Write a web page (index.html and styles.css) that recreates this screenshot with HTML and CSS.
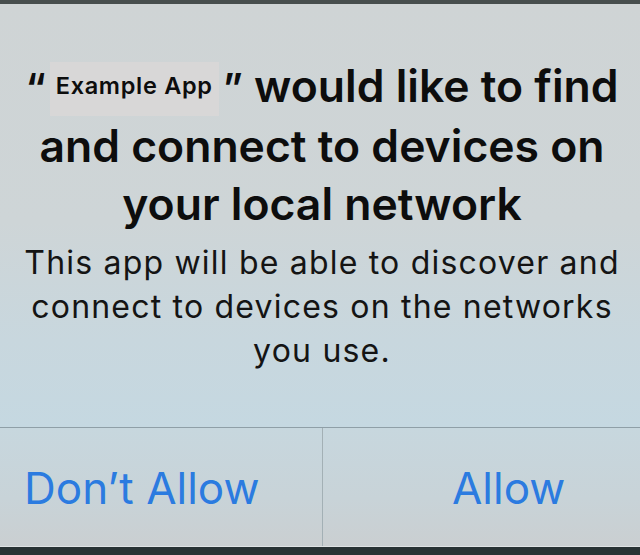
FILE: index.html
```html
<!DOCTYPE html>
<html lang="en">
<head>
<meta charset="utf-8">
<title>Local Network Permission</title>
<link rel="stylesheet" href="styles.css">
</head>
<body>
<div class="screen">
  <div class="topbar"></div>
  <div class="alert">
    <div class="content">
      <h1 class="title"><span class="q">“</span><span class="appname">Example App</span><span class="q q-close">”</span> would like to find<br>and connect to devices on<br>your local network</h1>
      <p class="message">This app will be able to discover and<br>connect to devices on the networks<br>you use.</p>
    </div>
    <div class="actions">
      <div class="btn btn-left">Don’t Allow</div>
      <div class="btn btn-right">Allow</div>
    </div>
  </div>
  <div class="bottombar"></div>
</div>
</body>
</html>
```

FILE: styles.css
```css
html, body {
  margin: 0;
  padding: 0;
}
body {
  width: 640px;
  height: 555px;
  overflow: hidden;
  font-family: Inter, "Liberation Sans", sans-serif;
  color: #0d0d0d;
}
.screen {
  width: 640px;
  height: 555px;
  display: flex;
  flex-direction: column;
}
.topbar {
  height: 4px;
  background: #474e4d;
  flex: none;
}
.alert {
  flex: 1;
  display: flex;
  flex-direction: column;
  background: linear-gradient(180deg, #cfd4d5 0%, #ced5d7 40%, #c8d7de 62%, #c5d8e1 78%);
}
.content {
  height: 424px;
  box-sizing: border-box;
  padding-top: 53px;
  padding-left: 4px;
  text-align: center;
  border-bottom: 1px solid #8f9fa7;
}
.title {
  margin: 0;
  font-size: 44.5px;
  font-weight: 600;
  line-height: 58px;
  letter-spacing: 0;
}
.q {
  font-size: 40px;
}
.appname {
  display: inline-block;
  font-size: 23.5px;
  font-weight: 600;
  line-height: 47px;
  padding: 0 6px 7px;
  margin: 0 4px;
  background: #d8d7d7;
  vertical-align: 8px;
  letter-spacing: 0.7px;
}
.message {
  margin: 8px 0 0;
  font-size: 32px;
  font-weight: 400;
  line-height: 44px;
  letter-spacing: 1.2px;
  color: #141414;
}
.actions {
  flex: 1;
  display: grid;
  grid-template-columns: 323px 1fr;
  background: linear-gradient(180deg, #c7d7de 0%, #c8d3d8 60%, #cacfd1 100%);
  border-bottom: 1px solid #dfe3e4;
}
.btn {
  display: flex;
  align-items: center;
  font-size: 44px;
  font-weight: 400;
  color: #2b7be0;
  padding-top: 2px;
}
.btn-left {
  border-right: 1px solid #a3b0b5;
  padding-left: 24px;
}
.btn-right {
  padding-left: 129px;
}
.bottombar {
  height: 8px;
  background: #283234;
  flex: none;
}
```
